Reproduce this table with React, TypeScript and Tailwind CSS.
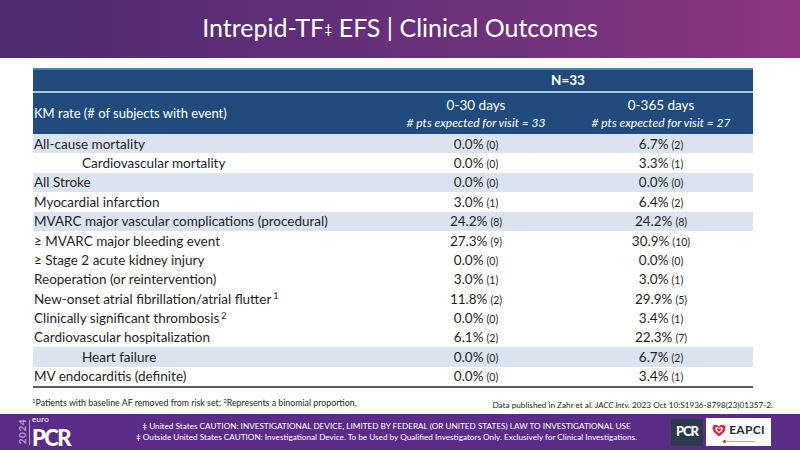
import React from "react";

type Row = {
  label: string;
  sup?: string;
  indent?: boolean;
  shaded?: boolean;
  a: [string, string];
  b: [string, string];
};

const ROWS: Row[] = [
  { label: "All-cause mortality", shaded: true, a: ["0.0%", "(0)"], b: ["6.7%", "(2)"] },
  { label: "Cardiovascular mortality", indent: true, a: ["0.0%", "(0)"], b: ["3.3%", "(1)"] },
  { label: "All Stroke", shaded: true, a: ["0.0%", "(0)"], b: ["0.0%", "(0)"] },
  { label: "Myocardial infarction", a: ["3.0%", "(1)"], b: ["6.4%", "(2)"] },
  { label: "MVARC major vascular complications (procedural)", shaded: true, a: ["24.2%", "(8)"], b: ["24.2%", "(8)"] },
  { label: "≥ MVARC major bleeding event", a: ["27.3%", "(9)"], b: ["30.9%", "(10)"] },
  { label: "≥ Stage 2 acute kidney injury", a: ["0.0%", "(0)"], b: ["0.0%", "(0)"] },
  { label: "Reoperation (or reintervention)", a: ["3.0%", "(1)"], b: ["3.0%", "(1)"] },
  { label: "New-onset atrial fibrillation/atrial flutter", sup: "1", a: ["11.8%", "(2)"], b: ["29.9%", "(5)"] },
  { label: "Clinically significant thrombosis", sup: "2", a: ["0.0%", "(0)"], b: ["3.4%", "(1)"] },
  { label: "Cardiovascular hospitalization", a: ["6.1%", "(2)"], b: ["22.3%", "(7)"] },
  { label: "Heart failure", indent: true, shaded: true, a: ["0.0%", "(0)"], b: ["6.7%", "(2)"] },
  { label: "MV endocarditis (definite)", a: ["0.0%", "(0)"], b: ["3.4%", "(1)"] },
];

function Cell({ v }: { v: [string, string] }) {
  return (
    <div className="flex items-baseline justify-center">
      <span className="text-[13.5px]">{v[0]}</span>
      <span className="ml-[3px] text-[10.5px]">{v[1]}</span>
    </div>
  );
}

export default function App(): React.JSX.Element {
  return (
    <div
      className="w-[800px] h-[450px] overflow-hidden bg-white flex flex-col text-[#1e1e1e]"
      style={{ fontFamily: "Lato, 'Liberation Sans', sans-serif" }}
    >
      {/* header band */}
      <div className="h-[58px] shrink-0 flex items-center justify-center bg-gradient-to-r from-[#4f2a70] via-[#66307a] to-[#8c3582]">
        <h1 className="text-white text-[25px] font-normal pb-[2px]">
          Intrepid-TF<sup className="text-[14px] relative top-[-3px]">‡</sup> EFS | Clinical Outcomes
        </h1>
      </div>

      {/* table */}
      <div className="mt-[10px] mx-[33px] w-[720px] flex flex-col">
        <div className="border-t-[2px] border-[#4f7fb8] bg-[#214b7d] h-[23px] flex text-white">
          <div className="w-[350px]" />
          <div className="flex-1 flex items-center justify-center text-[13.5px] font-bold">N=33</div>
        </div>
        <div className="h-[2px] bg-[#a9c4e2]" />
        <div className="bg-[#214b7d] h-[41px] flex text-white">
          <div className="w-[350px] flex items-end pb-[11px] text-[13px] pl-[1px]">
            KM rate (# of subjects with event)
          </div>
          <div className="w-[186px] flex flex-col items-center justify-center leading-[17px]">
            <span className="text-[13.5px]">0-30 days</span>
            <span className="text-[12px] italic"># pts expected for visit = 33</span>
          </div>
          <div className="flex-1 flex flex-col items-center justify-center leading-[17px]">
            <span className="text-[13.5px]">0-365 days</span>
            <span className="text-[12px] italic"># pts expected for visit = 27</span>
          </div>
        </div>

        {ROWS.map((r) => (
          <div
            key={r.label}
            className={`h-[19.4px] flex items-center ${r.shaded ? "bg-[#dae3ef]" : "bg-white"}`}
          >
            <div className={`w-[350px] text-[13.5px] ${r.indent ? "pl-[49px]" : "pl-[1px]"}`}>
              {r.label}
              {r.sup && <sup className="text-[9px] ml-[2px]">{r.sup}</sup>}
            </div>
            <div className="w-[186px]">
              <Cell v={r.a} />
            </div>
            <div className="flex-1">
              <Cell v={r.b} />
            </div>
          </div>
        ))}
        <div className="h-[2px] bg-[#5a5a5a]" />
      </div>

      {/* footnotes */}
      <div className="mx-[32px] w-[741px] flex justify-between flex-1 text-[#222]">
        <div className="pt-[9px] text-[8.8px] leading-[12px]">
          <sup className="text-[6px]">1</sup>Patients with baseline AF removed from risk set; <sup className="text-[6px]">2</sup>Represents a binomial proportion.
        </div>
        <div className="pt-[11px] text-[8.2px]">
          Data published in Zahr et al. <i>JACC Intv.</i> 2023 Oct 10:S1936-8798(23)01357-2.
        </div>
      </div>

      {/* footer band */}
      <div className="h-[36px] shrink-0 bg-[#5b2c86] flex items-center">
        <div className="w-[120px] h-full flex items-center pl-[18px]">
          <span className="[writing-mode:vertical-rl] rotate-180 text-[10px] font-bold text-[#b3a2cc] tracking-[0.5px] leading-[9px]">
            2024
          </span>
          <div className="w-[1px] h-[25px] bg-[#b3a2cc] ml-[2px] mr-[2px]" />
          <div className="flex flex-col text-white">
            <span className="text-[8px] tracking-[0.3px] leading-[9px]">euro</span>
            <span className="text-[22px] font-black tracking-[-1.5px] leading-[27px] -mb-[2px]">PCR</span>
          </div>
        </div>
        <div className="flex-1 flex flex-col items-center text-white text-[8.2px] leading-[11.5px] pr-[18px]">
          <span>‡ United States CAUTION: INVESTIGATIONAL DEVICE, LIMITED BY FEDERAL (OR UNITED STATES) LAW TO INVESTIGATIONAL USE</span>
          <span>‡ Outside United States CAUTION: Investigational Device. To be Used by Qualified Investigators Only. Exclusively for Clinical Investigations.</span>
        </div>
        <div className="flex items-center mr-[29px]">
          <div className="w-[32px] h-[27px] bg-[#2c3b4c] flex items-center justify-center text-white text-[13px] font-black tracking-[-1px]">
            PCR
          </div>
          <div className="w-[65px] h-[28px] bg-white ml-[3px] flex flex-col items-center justify-center">
            <div className="flex items-center">
              <svg width="14" height="13" viewBox="0 0 24 22">
                <path d="M12 21 C4 15 1 11 1 6.5 C1 3 3.7 1 6.5 1 C9 1 11 2.5 12 4.5 C13 2.5 15 1 17.5 1 C20.3 1 23 3 23 6.5 C23 11 20 15 12 21Z" fill="#d7263d" />
                <path d="M12 16 C7.5 12.5 5.5 10.2 5.5 7.8 C5.5 6 6.8 5 8.2 5 C9.8 5 11.2 6 12 7.5 C12.8 6 14.2 5 15.8 5 C17.2 5 18.5 6 18.5 7.8 C18.5 10.2 16.5 12.5 12 16Z" fill="#fff" />
                <path d="M12 13.5 C9.5 11.5 8.3 10 8.3 8.6 C8.3 7.7 9 7.2 9.7 7.2 C10.7 7.2 11.5 7.9 12 8.9 C12.5 7.9 13.3 7.2 14.3 7.2 C15 7.2 15.7 7.7 15.7 8.6 C15.7 10 14.5 11.5 12 13.5Z" fill="#d7263d" />
              </svg>
              <span className="ml-[3px] text-[12px] font-bold text-[#1e2a3a] tracking-[0.3px]">EAPCI</span>
            </div>
            <div className="flex items-center mt-[1px]">
              <div className="w-[3px] h-[3px] rounded-full bg-[#d7263d]" />
              <div className="w-[28px] h-[1px] bg-[#c9a0a8] ml-[1px]" />
            </div>
          </div>
        </div>
      </div>
    </div>
  );
}
